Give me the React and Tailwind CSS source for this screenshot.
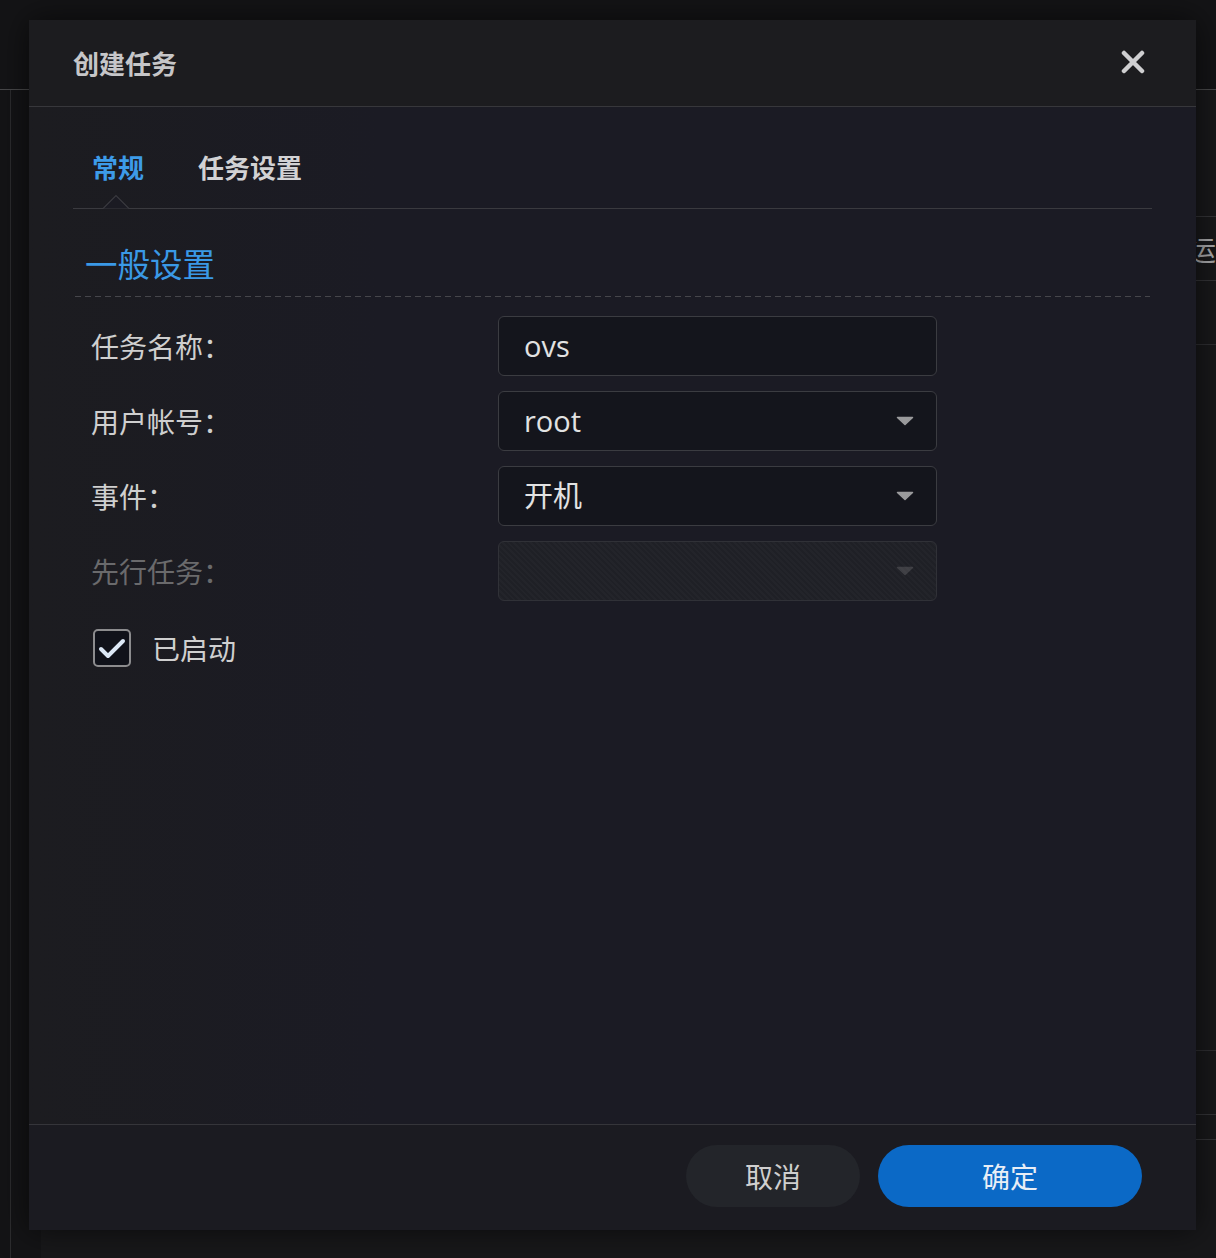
import React from "react";

const font = "font-['Noto_Sans_CJK_SC','Noto_Sans',sans-serif]";
const valueFont = "font-['Open_Sans','Noto_Sans_CJK_SC',sans-serif]";

function Arrow({ dim }) {
  return (
    <svg width="18" height="10" viewBox="0 0 18 10" className={dim ? "opacity-25" : ""}>
      <path d="M1.5 1.5 L16.5 1.5 L9 8.5 Z" fill="#9a9a9c" stroke="#9a9a9c" strokeWidth="1.5" strokeLinejoin="round" />
    </svg>
  );
}

function Field({ label, value, select, disabled }) {
  return (
    <div className="flex items-center">
      <div className={`w-[425px] pl-[18px] text-[28px] ${disabled ? "text-[#6a6a6c]" : "text-[#cfcfcf]"}`}>{label}</div>
      <div
        className={`w-[439px] h-[60px] rounded-[6px] border flex items-center pl-[25px] pr-[22px] ${
          disabled
            ? "border-[#303137] bg-[repeating-linear-gradient(45deg,#1f2026_0px,#1f2026_2px,#23242a_2px,#23242a_4px)]"
            : "border-[#3b3c41] bg-[#14151c]"
        }`}
      >
        <span className={`flex-1 text-[29px] text-[#e2e2e2] ${valueFont}`}>{value}</span>
        {select && <Arrow dim={disabled} />}
      </div>
    </div>
  );
}

export default function App() {
  return (
    <div className={`relative w-[1216px] h-[1258px] bg-[#141416] overflow-hidden ${font}`}>
      {/* page behind the dialog */}
      <div className="flex flex-col h-full">
        <div className="h-[90px] shrink-0 border-b border-[#48484a]" />
        <div className="flex flex-1">
          <div className="w-[19px] border-r border-[#2c2c2e]" />
          <div className="flex-1 ml-[30px] flex flex-col bg-[#18181a]">
            <div className="h-[127px] border-b border-[#333336]" />
            <div className="h-[64px] border-b border-[#333336] flex items-center pl-[1147px] text-[28px] text-[#a8a8aa] whitespace-nowrap">运</div>
            <div className="h-[64px] border-b border-[#2e2e31]" />
            <div className="h-[706px] border-b border-[#2e2e31]" />
            <div className="h-[64px] border-b border-[#333336]" />
            <div className="h-[25px] border-b border-[#333336]" />
          </div>
        </div>
      </div>

      {/* dialog */}
      <div className="absolute left-[29px] top-[20px] w-[1167px] h-[1210px] flex flex-col bg-[#1b1b23] shadow-[0_0_30px_rgba(0,0,0,0.6)]">
        <div className="h-[87px] shrink-0 flex items-center justify-between pl-[44px] pr-[51px] pb-[2px] bg-[#1c1c1f] border-b border-[#37373b]">
          <span className="text-[26px] font-bold text-[#c6c6c8]">创建任务</span>
          <svg width="24" height="24" viewBox="0 0 24 24">
            <path d="M3 3 L21 21 M21 3 L3 21" stroke="#cfcfd1" strokeWidth="4.5" strokeLinecap="round" />
          </svg>
        </div>

        <div className="flex-1 px-[44px] bg-[linear-gradient(90deg,#1c1c20_0%,#1b1b24_30%,#1b1b24_100%)]">
          <div className="relative h-[102px] pt-[17px] flex items-center border-b border-[#3a3a3f]">
            <span className="pl-[19px] text-[26px] font-bold text-[#3d9be9]">常规</span>
            <span className="ml-[54px] text-[26px] font-bold text-[#d2d2d4]">任务设置</span>
            <svg className="absolute left-[30px] bottom-[-1px]" width="26" height="15" viewBox="0 0 26 15">
              <path d="M0 14.5 L13 1.5 L26 14.5 Z" fill="#1b1b23" />
              <path d="M0 14.5 L13 1.5 L26 14.5" fill="none" stroke="#3a3a3f" strokeWidth="1.2" />
            </svg>
          </div>

          <div className="h-[87px] pt-[21px] flex items-center pl-[12px]">
            <span className="text-[32.5px] text-[#3a99e6]">一般设置</span>
          </div>
          <div className="mx-[2px] h-px bg-[repeating-linear-gradient(90deg,#46464b_0px,#46464b_6px,transparent_6px,transparent_10px)]" />

          <div className="mt-[19px] flex flex-col gap-[15px]">
            <Field label="任务名称：" value="ovs" />
            <Field label="用户帐号：" value="root" select />
            <Field label="事件：" value="开机" select />
            <Field label="先行任务：" value="" select disabled />
          </div>

          <div className="mt-[26px] pl-[20px] flex items-center gap-[21px]">
            <div className="w-[38px] h-[38px] rounded-[5px] border-2 border-[#8c8c8e] bg-[#10121a] flex items-center justify-center">
              <svg width="30" height="24" viewBox="0 0 30 24">
                <path d="M4 13 L11 20 L26 5" fill="none" stroke="#dce8f6" strokeWidth="4" strokeLinecap="round" strokeLinejoin="round" />
              </svg>
            </div>
            <span className="text-[28px] text-[#cfcfcf]">已启动</span>
          </div>
        </div>

        <div className="h-[106px] shrink-0 border-t border-[#35353a] bg-[#1b1b21] flex items-start justify-end pt-[20px] pr-[54px] gap-[18px]">
          <button className="w-[174px] h-[62px] rounded-full bg-[#23252a] text-[28px] text-[#cfcfcf]">取消</button>
          <button className="w-[264px] h-[62px] rounded-full bg-[#0b69c6] text-[28px] text-[#e8eef6]">确定</button>
        </div>
      </div>
    </div>
  );
}
